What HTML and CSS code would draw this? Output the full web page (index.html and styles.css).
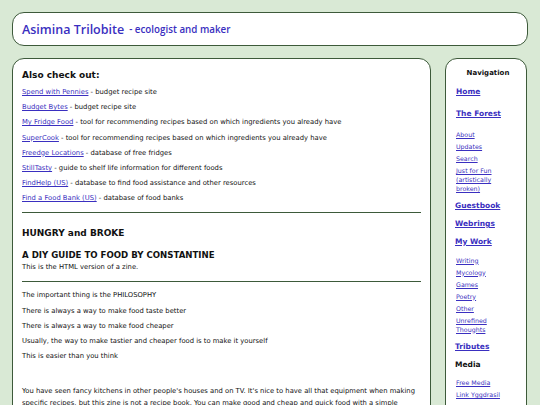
FILE: index.html
```html
<!DOCTYPE html>
<html lang="en">
<head>
    <meta charset="UTF-8">
    <meta name="viewport" content="width=device-width, initial-scale=1.0">
    <title>Hungry and Broke - Asimina Trilobite</title>
    <link rel="stylesheet" href="styles.css">
</head>
<body>
    <div class="header">
        <span class="site-name">Asimina Trilobite</span>
        <span class="tagline">- ecologist and maker</span>
    </div>

    <div class="layout">
        <!-- main content -->
        <div class="main">
            <h3>Also check out:</h3>
            <p><a href="#">Spend with Pennies</a> - budget recipe site</p>
            <p><a href="#">Budget Bytes</a> - budget recipe site</p>
            <p><a href="#">My Fridge Food</a> - tool for recommending recipes based on which ingredients you already have</p>
            <p><a href="#">SuperCook</a> - tool for recommending recipes based on which ingredients you already have</p>
            <p><a href="#">Freedge Locations</a> - database of free fridges</p>
            <p><a href="#">StillTasty</a> - guide to shelf life information for different foods</p>
            <p><a href="#">FindHelp (US)</a> - database to find food assistance and other resources</p>
            <p><a href="#">Find a Food Bank (US)</a> - database of food banks</p>

            <hr>

            <h2>HUNGRY and BROKE</h2>
            <h2 class="subtitle">A DIY GUIDE TO FOOD BY CONSTANTINE</h2>
            <div class="note">This is the HTML version of a zine.</div>

            <hr class="second">

            <p>The important thing is the PHILOSOPHY</p>
            <p>There is always a way to make food taste better</p>
            <p>There is always a way to make food cheaper</p>
            <p>Usually, the way to make tastier and cheaper food is to make it yourself</p>
            <p>This is easier than you think</p>
            <p class="long">You have seen fancy kitchens in other people's houses and on TV. It's nice to have all that equipment when making specific recipes, but this zine is not a recipe book. You can make good and cheap and quick food with a simple setup.</p>
        </div>

        <!-- navigation -->
        <div class="nav">
            <div class="nav-title">Navigation</div>
            <a class="nav-big home" href="#">Home</a>
            <a class="nav-big forest" href="#">The Forest</a>
            <div class="nav-sub first">
                <a href="#">About</a>
                <a href="#">Updates</a>
                <a href="#">Search</a>
                <a href="#">Just for Fun (artistically broken)</a>
            </div>
            <a class="nav-big flush" href="#">Guestbook</a>
            <a class="nav-big flush" href="#">Webrings</a>
            <a class="nav-big flush" href="#">My Work</a>
            <div class="nav-sub">
                <a href="#">Writing</a>
                <a href="#">Mycology</a>
                <a href="#">Games</a>
                <a href="#">Poetry</a>
                <a href="#">Other</a>
                <a href="#">Unrefined Thoughts</a>
            </div>
            <a class="nav-big flush" href="#">Tributes</a>
            <div class="nav-head">Media</div>
            <div class="nav-sub">
                <a href="#">Free Media</a>
                <a href="#">Link Yggdrasil</a>
            </div>
        </div>
    </div>
</body>
</html>
```

FILE: styles.css
```css
* {
    margin: 0;
    padding: 0;
    box-sizing: border-box;
}

body {
    font-family: "DejaVu Sans", Verdana, sans-serif;
    background-color: #d9e9d5;
    color: #111;
    padding: 12px 12px 0 12px;
    overflow: hidden;
}

a {
    color: #3a2fc0;
}

.header {
    background: white;
    border: 1.5px solid #3d5a3a;
    border-radius: 12px;
    height: 34px;
    padding: 0 9px;
    display: flex;
    align-items: center;
    gap: 5px;
    color: #3a2fc0;
    font-family: "Open Sans", "DejaVu Sans", sans-serif;
    font-weight: 600;
}

.site-name {
    font-size: 12.5px;
}

.tagline {
    font-size: 9.8px;
}

.layout {
    display: flex;
    gap: 14px;
    margin-top: 12px;
    align-items: flex-start;
}

.main, .nav {
    background: white;
    border: 1.5px solid #3d5a3a;
    border-radius: 12px;
    min-height: 400px;
}

/* main column */
.main {
    width: 419px;
    padding: 11px 9px 9px;
    font-size: 6.8px;
}

.main h3 {
    font-size: 9px;
    line-height: 11px;
    margin-bottom: 7px;
}

.main p {
    line-height: 9px;
    margin-bottom: 6.2px;
}

.main p.long {
    margin-top: 23.5px;
    line-height: 12px;
}

.main hr {
    border: none;
    border-top: 1.5px solid #3d5a3a;
    margin: 9px 0 14.5px;
}

.main hr.second {
    margin: 9px 0 9.5px;
}

.main h2 {
    font-size: 9px;
    line-height: 11px;
    margin-bottom: 11px;
}

.main h2.subtitle {
    font-size: 8.6px;
    margin-bottom: 2px;
}

.note {
    line-height: 9px;
}

/* navigation column */
.nav {
    width: 82px;
    padding: 8.5px 6px 8px 10px;
    display: flex;
    flex-direction: column;
    align-items: flex-start;
}

.nav-title {
    align-self: center;
    font-weight: bold;
    font-size: 7px;
    line-height: 10px;
}

.nav-big {
    font-weight: bold;
    font-size: 7.5px;
    line-height: 10px;
    margin-left: -1px;
    margin-top: 8px;
}

.nav-big.home {
    margin: 9px 0 0 0;
}

.nav-big.forest {
    margin: 12px 0 0 0;
}

.nav-sub {
    display: flex;
    flex-direction: column;
    gap: 3px;
    width: 48px;
    font-size: 6.3px;
    line-height: 9px;
    margin-top: 8.5px;
}

.nav-sub.first {
    margin-top: 11.5px;
}

.nav-head {
    font-weight: bold;
    font-size: 7.5px;
    line-height: 10px;
    margin: 8px 0 0 -1px;
}
```
